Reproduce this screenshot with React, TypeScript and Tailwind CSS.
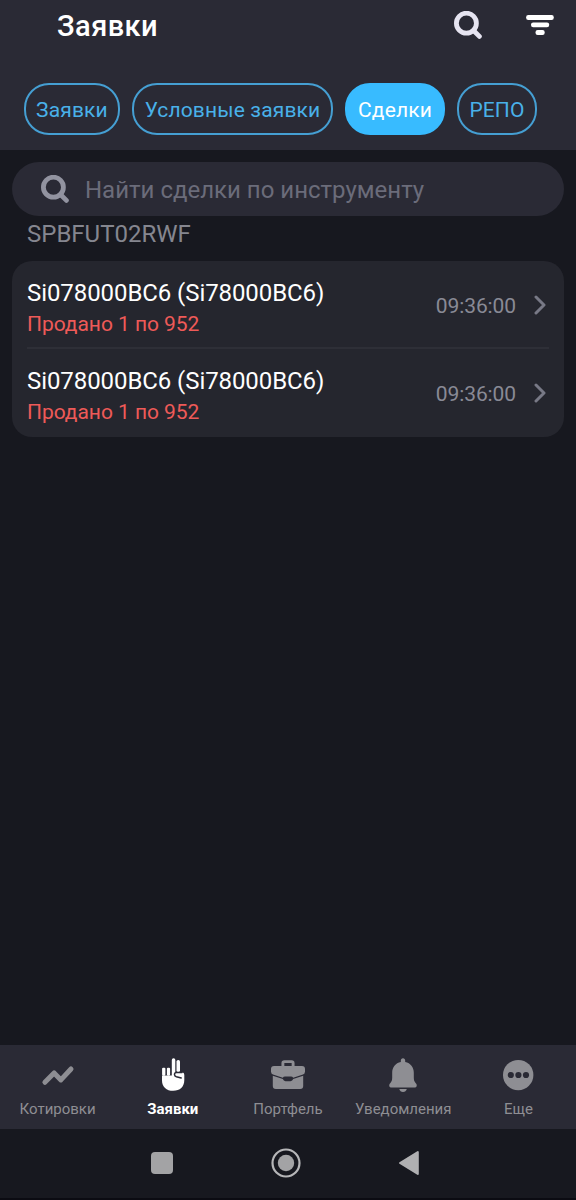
import React from 'react';

type Chip = { label: string; box: string; active?: boolean };

const chips: Chip[] = [
  { label: 'Заявки', box: 'w-24' },
  { label: 'Условные заявки', box: 'w-[201px]' },
  { label: 'Сделки', box: 'w-[100px]', active: true },
  { label: 'РЕПО', box: 'w-20' },
];

const deals = [
  { id: 1, name: 'Si078000BC6 (Si78000BC6)', info: 'Продано 1 по 952', time: '09:36:00' },
  { id: 2, name: 'Si078000BC6 (Si78000BC6)', info: 'Продано 1 по 952', time: '09:36:00' },
];

function SearchIcon({ className }: { className: string }) {
  return (
    <svg viewBox="0 0 28 28" className={`h-7 w-7 shrink-0 ${className}`} fill="none" stroke="currentColor">
      <circle cx="12.4" cy="12.2" r="10" strokeWidth="4.8" />
      <path d="M19.5 19.5L25.4 25.4" strokeWidth="4.8" strokeLinecap="round" />
    </svg>
  );
}

function FilterIcon() {
  return (
    <svg viewBox="0 0 28 20" className="h-5 w-7 shrink-0 text-white" fill="currentColor">
      <rect x="0.1" y="0" width="27.7" height="4.9" rx="2.2" />
      <rect x="5" y="7.4" width="18.2" height="4.9" rx="2.2" />
      <rect x="9.5" y="15" width="9.2" height="4.9" rx="2.2" />
    </svg>
  );
}

function TrendIcon() {
  return (
    <svg viewBox="0 0 36 36" className="h-9 w-9" fill="none" stroke="currentColor" strokeWidth="5">
      <path d="M4.9 25.3L14.1 15.9L20.9 22.9L31 12" strokeLinecap="round" strokeLinejoin="round" />
    </svg>
  );
}

function HandIcon() {
  return (
    <svg viewBox="0 0 36 36" className="h-9 w-9" fill="currentColor">
      <rect x="7.1" y="10.7" width="3.3" height="8" rx="1.1" />
      <rect x="11.9" y="10.7" width="3.2" height="8" rx="1.1" />
      <rect x="16.8" y="1.3" width="3.5" height="20" rx="1.7" />
      <rect x="21.5" y="3" width="3.5" height="12" rx="1.6" />
      <path d="M7 18.4H17L19 15.2H27Q29.3 15.2 29.3 17.7V23C29.3 29.8 25 33.8 18.2 33.8C11.4 33.8 7 29.8 7 23.4Z" />
      <path d="M27 15.5H21.6Q19.4 15.6 19.5 17.6Q19.6 19.2 21.4 19.7L26.2 20.9" fill="none" stroke="#2a2a35" strokeWidth="1.5" strokeLinecap="round" />
    </svg>
  );
}

function BriefcaseIcon() {
  return (
    <svg viewBox="0 0 36 36" className="h-9 w-9" fill="currentColor">
      <path d="M12.9 10V6Q12.9 4.6 14.4 4.6H21.6Q23.1 4.6 23.1 6V10" fill="none" stroke="currentColor" strokeWidth="2.9" />
      <path d="M4 9H32Q35 9 35 12V14.5Q35 16.8 33 17.5L23.2 20.7Q22.5 19.6 21 19.6H15Q13.5 19.6 12.8 20.7L3 17.5Q1 16.8 1 14.5V12Q1 9 4 9Z" />
      <path d="M2.8 18.7L12.8 22.1Q13.6 24.2 15.5 24.2H20.5Q22.4 24.2 23.2 22.1L33.2 18.7V29Q33.2 32 30.2 32H5.8Q2.8 32 2.8 29Z" />
    </svg>
  );
}

function BellIcon() {
  return (
    <svg viewBox="0 0 36 36" className="h-9 w-9" fill="currentColor">
      <path d="M18 1.3C19.4 1.3 20.2 2.3 20.2 3.6V5C25.5 6 28.8 10.2 28.8 15.8V20.5C28.8 23.2 29.3 24.5 30.6 25.9C32.7 28 31.8 30.6 29.3 30.6H6.7C4.2 30.6 3.3 28 5.4 25.9C6.7 24.5 7.2 23.2 7.2 20.5V15.8C7.2 10.2 10.5 6 15.8 5V3.6C15.8 2.3 16.6 1.3 18 1.3Z" />
      <path d="M14.3 32H21.8C21.3 34 20 34.9 18 34.9S14.8 34 14.3 32Z" />
    </svg>
  );
}

function MoreIcon() {
  return (
    <svg viewBox="0 0 36 36" className="h-9 w-9" fill="currentColor">
      <circle cx="18.2" cy="18.1" r="15.2" />
      <g fill="#2a2a35">
        <circle cx="10.8" cy="18" r="3.1" />
        <circle cx="18.4" cy="18" r="3.1" />
        <circle cx="26" cy="18" r="3.1" />
      </g>
    </svg>
  );
}

const tabs = [
  { label: 'Котировки', icon: <TrendIcon />, active: false },
  { label: 'Заявки', icon: <HandIcon />, active: true },
  { label: 'Портфель', icon: <BriefcaseIcon />, active: false },
  { label: 'Уведомления', icon: <BellIcon />, active: false },
  { label: 'Еще', icon: <MoreIcon />, active: false },
];

export default function App() {
  return (
    <div className="flex h-[1200px] w-[576px] flex-col overflow-hidden bg-[#17181f] font-[Roboto,sans-serif]">
      <header className="h-[150px] shrink-0 bg-[#2a2a35]">
        <div className="flex h-[50px] items-center pr-[22px] pl-[57px]">
          <h1 className="grow pt-px text-[29px] leading-[50px] font-medium tracking-[0.45px] text-white">Заявки</h1>
          <SearchIcon className="mr-11 text-[#e6e4f1]" />
          <FilterIcon />
        </div>
        <div className="flex gap-3 pt-[33px] pl-6">
          {chips.map((chip) => (
            <button
              key={chip.label}
              className={`flex h-[52px] shrink-0 items-center justify-center rounded-[25px] border-2 pt-1 text-[21px] tracking-[0.15px] whitespace-nowrap ${chip.box} ${
                chip.active ? 'border-[#38bbff] bg-[#38bbff] text-white' : 'border-[#459fd3] text-[#49b1e9]'
              }`}
            >
              {chip.label}
            </button>
          ))}
        </div>
      </header>

      <main className="flex grow flex-col px-3 pt-3">
        <div className="flex h-[54px] shrink-0 items-center rounded-full bg-[#2a2a35] pl-[29px]">
          <SearchIcon className="text-[#9293a0]" />
          <span className="ml-4 pt-0.5 text-[24px] leading-[54px] text-[#6b6c7a]">Найти сделки по инструменту</span>
        </div>
        <h2 className="h-[45px] pl-[15px] text-[24px] leading-[36px] text-[#85868f]">SPBFUT02RWF</h2>
        <ul className="rounded-[20px] bg-[#25262e] px-[15px]">
          {deals.map((deal) => (
            <li key={deal.id} className="flex h-[88px] items-center border-b-2 border-[#2e2f37] pt-[2px] last:border-b-0 last:pt-0">
              <div className="grow pt-[7px]">
                <p className="text-[24px] leading-[31px] tracking-[-0.08px] text-white">{deal.name}</p>
                <p className="text-[21px] leading-[30px] tracking-[-0.05px] text-[#ee5a58]">{deal.info}</p>
              </div>
              <span className="pt-[3px] text-[21px] tracking-[-0.1px] text-[#898a95]">{deal.time}</span>
              <svg viewBox="0 0 12 20" className="mr-[3px] ml-[18px] h-5 w-3" fill="none" stroke="#787986" strokeWidth="3">
                <path d="M2 2L10 10L2 18" strokeLinecap="round" strokeLinejoin="round" />
              </svg>
            </li>
          ))}
        </ul>
      </main>

      <nav className="grid h-[84px] shrink-0 grid-cols-5 bg-[#2a2a35]">
        {tabs.map((tab) => (
          <div key={tab.label} className={`flex flex-col items-center pt-3 ${tab.active ? 'text-white' : 'text-[#8e8e93]'}`}>
            {tab.icon}
            <span className={`mt-[6px] text-[15px] leading-5 whitespace-nowrap ${tab.active ? 'font-bold' : 'font-normal'}`}>
              {tab.label}
            </span>
          </div>
        ))}
      </nav>

      <footer className="flex h-[71px] shrink-0 items-center border-b-2 border-[#0b0b12] pb-[2px] pl-[151px]">
        <span className="h-[22px] w-[22px] rounded-[4px] bg-[#a3a3a5]" />
        <svg viewBox="0 0 30 30" className="ml-[98px] h-[30px] w-[30px]">
          <circle cx="15" cy="15" r="13.5" fill="none" stroke="#b6b6b8" strokeWidth="2.2" />
          <circle cx="15" cy="15" r="8.2" fill="#a3a3a5" />
        </svg>
        <svg viewBox="0 0 22 26" className="ml-[97px] h-[26px] w-[22px]">
          <path d="M2 13L19.8 2V24Z" fill="#b0b0b2" stroke="#b0b0b2" strokeWidth="2" strokeLinejoin="round" />
        </svg>
      </footer>
    </div>
  );
}
